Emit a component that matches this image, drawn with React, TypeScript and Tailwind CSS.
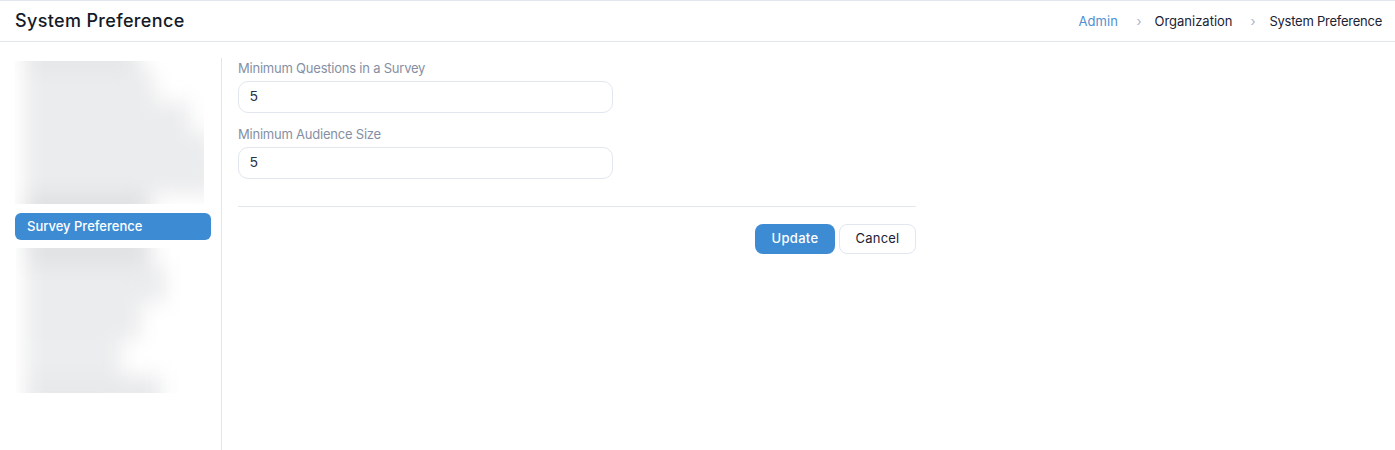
import React from 'react';

const font = { sans: "font-['Inter','Noto_Sans',sans-serif]" };

const Header: React.FC = () => (
  <header className="h-[42px] bg-white border-t border-b border-[#e2e6ee] pl-[15px] pr-[13px] flex items-center justify-between">
    <h1 className="text-[18px] leading-[26px] font-medium text-[#141a28] tracking-[0.35px]">System Preference</h1>
    <nav className="flex items-center pt-[1px] text-[13px] text-[#1c2233]">
      <a className="text-[#4f8fd0] w-[39px] whitespace-nowrap tracking-[0.1px]">Admin</a>
      <span className="text-[#a9b3c4] text-[13px] ml-[19px] mr-[13px]">›</span>
      <span className="w-[77px] whitespace-nowrap tracking-[0px]">Organization</span>
      <span className="text-[#a9b3c4] text-[13px] ml-[19px] mr-[14px]">›</span>
      <span className="whitespace-nowrap tracking-[-0.25px]">System Preference</span>
    </nav>
  </header>
);

const BlurBlock: React.FC<{ className: string; bars: string[] }> = ({ className, bars }) => (
  <div className={`overflow-hidden bg-white ${className}`}>
    <div className="flex flex-col h-[calc(100%+40px)] -mt-[20px] blur-[10px]">
      {bars.map((b, i) => (
        <div key={i} className={`flex-1 ml-[10px] ${b}`} />
      ))}
    </div>
  </div>
);

const Field: React.FC<{ label: string; value: string }> = ({ label, value }) => (
  <div className="flex flex-col">
    <label className="pt-[1px] text-[13px] leading-[18px] text-[#858fa3] tracking-[-0.22px]">{label}</label>
    <input
      defaultValue={value}
      className="mt-[4px] w-[375px] h-[32px] rounded-[10px] border border-[#e2e6ee] px-[11px] pb-[3px] text-[14px] text-[#2a3142] font-['Liberation_Sans',sans-serif] outline-none"
    />
  </div>
);

const App: React.FC = () => (
  <div className={`h-[450px] w-full bg-white overflow-hidden ${font.sans}`}>
    <Header />
    <div className="flex pl-[15px] pt-[16px]">
      <aside className="w-[207px] h-[392px] border-r border-[#e2e6ee] pr-[10px] pt-[3px] shrink-0">
        <BlurBlock
          className="w-[189px] h-[143px]"
          bars={[
            'w-[115px] bg-[#e6e7e8]',
            'w-[130px] bg-[#ebeced]',
            'w-[165px] bg-[#ebeced]',
            'w-[190px] bg-[#ebeced]',
            'w-[195px] bg-[#ebeced]',
            'w-[125px] bg-[#dfe0e1]',
          ]}
        />
        <div className="mt-[9px] h-[27px] w-[196px] rounded-[6px] bg-[#3d8bd3] pl-[12px] flex items-center text-[13px] font-medium text-white tracking-[0px]">
          Survey Preference
        </div>
        <BlurBlock
          className="ml-[1px] mt-[8px] w-[165px] h-[145px]"
          bars={[
            'w-[125px] bg-[#e1e2e4]',
            'w-[140px] bg-[#ebeced]',
            'w-[115px] bg-[#ebeced]',
            'w-[95px] bg-[#ecedee]',
            'w-[135px] bg-[#e8e9eb]',
          ]}
        />
      </aside>
      <main className="ml-[16px] w-[678px]">
        <div className="flex flex-col gap-[11px]">
          <Field label="Minimum Questions in a Survey" value="5" />
          <Field label="Minimum Audience Size" value="5" />
        </div>
        <div className="mt-[27px] border-t border-[#e2e6ee] pt-[17px] flex justify-end gap-[4px]">
          <button className="h-[30px] w-[80px] rounded-[8px] bg-[#3d8bd3] text-white text-[13px] font-medium tracking-[0.3px]">Update</button>
          <button className="h-[30px] w-[77px] rounded-[8px] bg-white border border-[#e2e6ee] text-[#1c2233] text-[13px] tracking-[0.2px]">Cancel</button>
        </div>
      </main>
    </div>
  </div>
);

export default App;
